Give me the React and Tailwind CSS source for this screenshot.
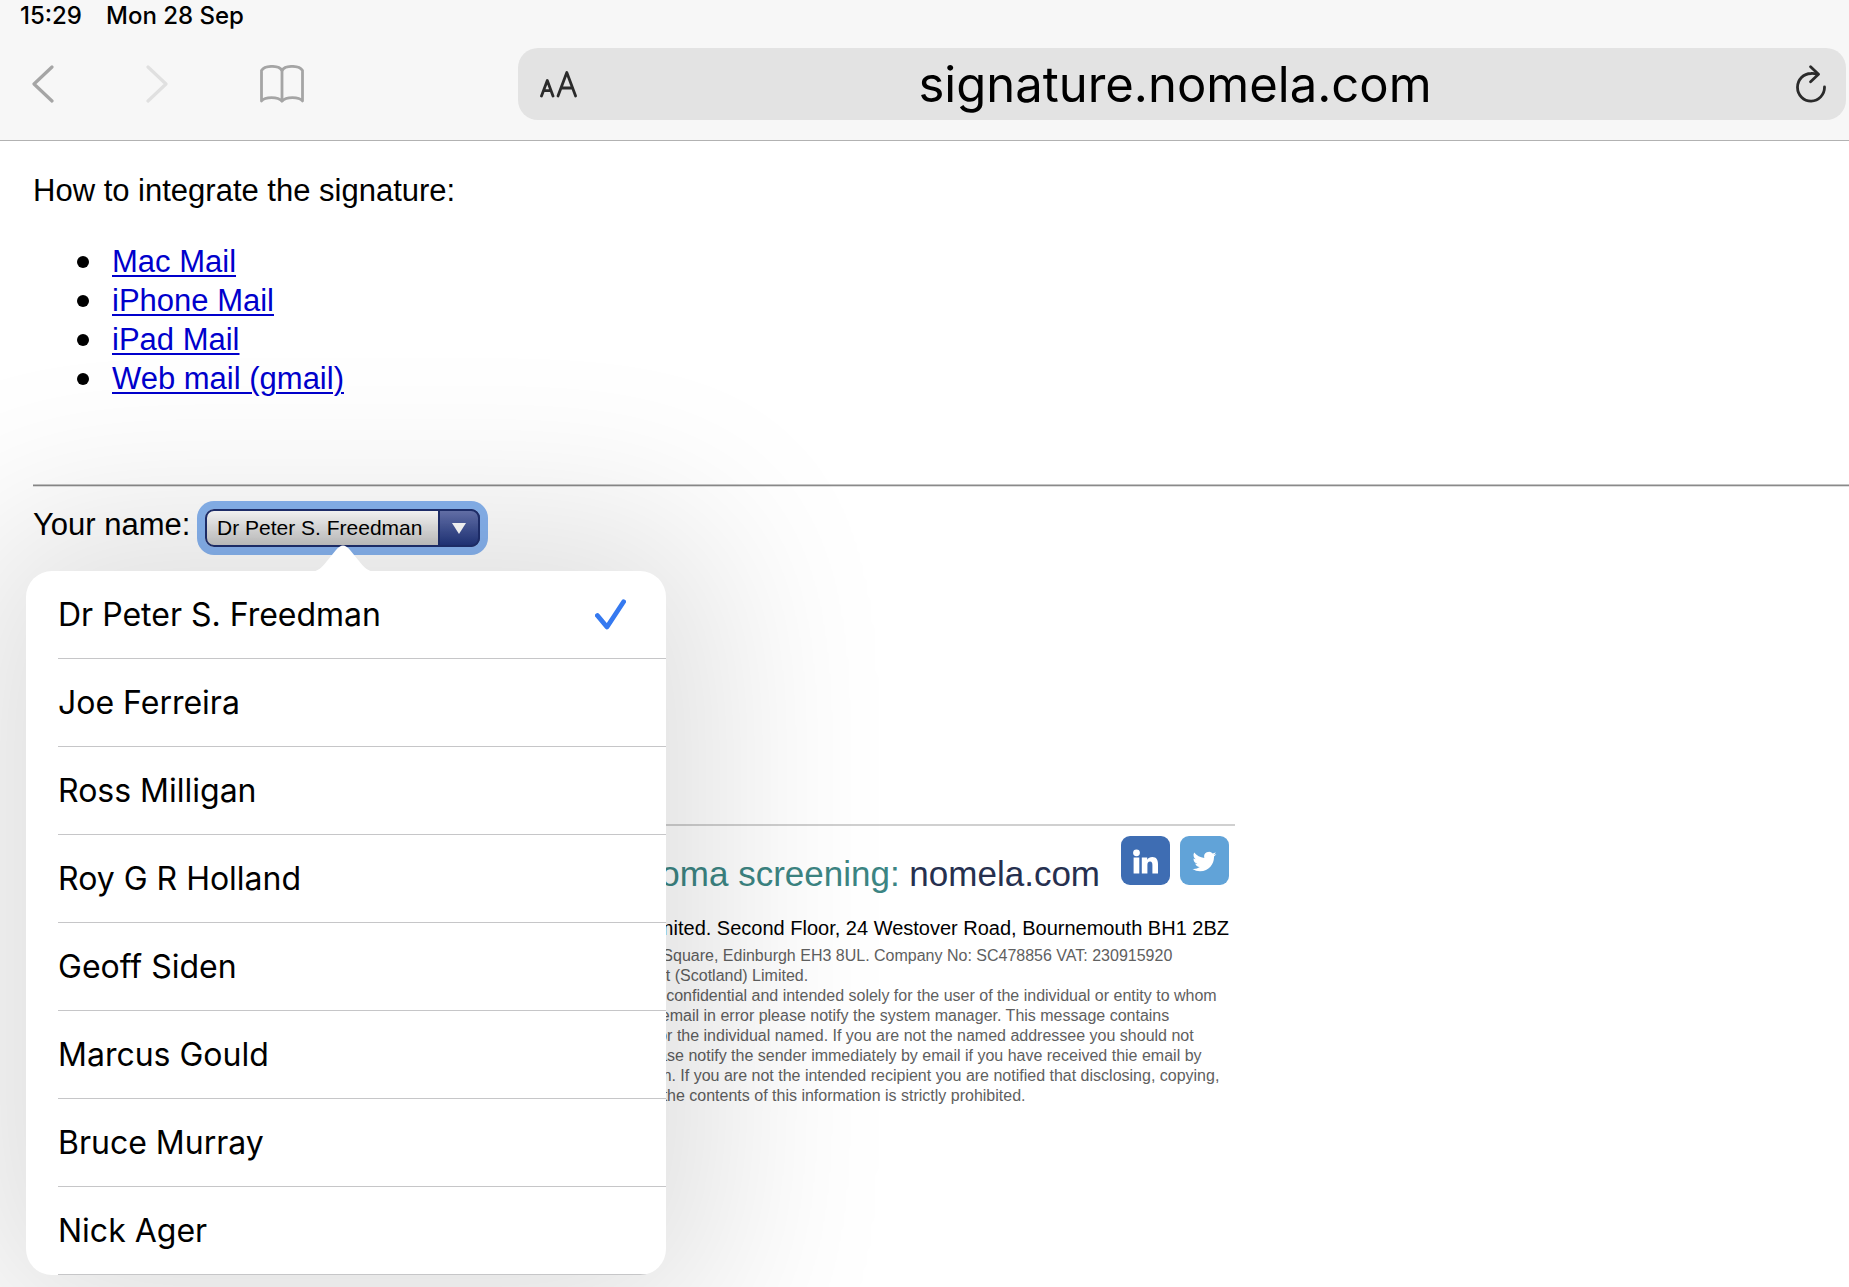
import React, { useState } from 'react';

const GUIDES = ['Mac Mail', 'iPhone Mail', 'iPad Mail', 'Web mail (gmail)'];

const NAMES = [
  'Dr Peter S. Freedman',
  'Joe Ferreira',
  'Ross Milligan',
  'Roy G R Holland',
  'Geoff Siden',
  'Marcus Gould',
  'Bruce Murray',
  'Nick Ager',
];

const BrowserBar = () => (
  <header className="bg-[#f7f7f7] border-b border-[#b2b2b2] font-['Inter',sans-serif]">
    <div className="flex gap-6 px-5 pt-1 h-8 text-[24px] leading-6 font-medium text-black">
      <span>15:29</span>
      <span>Mon 28 Sep</span>
    </div>
    <div className="flex items-center pt-4 pb-5 pl-8 pr-[3px]">
      <button aria-label="Back" className="shrink-0">
        <svg width="22" height="38" viewBox="0 0 22 38" fill="none" stroke="#a5a5a5" strokeWidth="3.2" strokeLinecap="round" strokeLinejoin="round">
          <path d="M20 2 L2 19 L20 36" />
        </svg>
      </button>
      <button aria-label="Forward" disabled className="shrink-0 ml-[92px]">
        <svg width="22" height="38" viewBox="0 0 22 38" fill="none" stroke="#e0e0e0" strokeWidth="3.2" strokeLinecap="round" strokeLinejoin="round">
          <path d="M2 2 L20 19 L2 36" />
        </svg>
      </button>
      <button aria-label="Bookmarks" className="shrink-0 ml-[92px]">
        <svg width="44" height="38" viewBox="0 0 44 38" fill="none" stroke="#a5a5a5" strokeWidth="2.8" strokeLinecap="round" strokeLinejoin="round">
          <path d="M22 5.5 C19 0 5 0 1.5 5.5 V36 C5 31.5 18 31.5 22 36 C26 31.5 39 31.5 42.5 36 V5.5 C39 0 25 0 22 5.5 Z" />
          <path d="M22 5.5 V36" />
        </svg>
      </button>
      <div className="flex flex-1 min-w-0 items-center h-[72px] ml-[214px] pl-[22px] pr-5 rounded-[20px] bg-[#e3e3e3]">
        <button aria-label="Text size" className="shrink-0">
          <svg width="38" height="28" viewBox="0 0 38 28" fill="none" stroke="#2b2b2b" strokeWidth="2.8" strokeLinecap="round" strokeLinejoin="round">
            <path d="M1.5 26 L7.3 10.5 L13 26 M3.8 20.6 H11" />
            <path d="M18 26 L26.8 2.5 L35.6 26 M21.3 18 H32.4" />
          </svg>
        </button>
        <input
          aria-label="Address"
          readOnly
          value="signature.nomela.com"
          className="flex-1 min-w-0 h-16 pt-0.5 pr-6 bg-transparent text-center text-[49px] text-black outline-none"
        />
        <button aria-label="Reload" className="shrink-0">
          <svg width="30" height="38" viewBox="0 0 30 38" fill="none" stroke="#2b2b2b" strokeWidth="2.8" strokeLinecap="round" strokeLinejoin="round">
            <path d="M28.5 22 A13.5 13.8 0 1 1 15 8.5 Q18 8.3 21 9.3" />
            <path d="M14.6 1.8 L22.5 9.3 L14.6 16.8" />
          </svg>
        </button>
      </div>
    </div>
  </header>
);

const NameMenu = ({ selected, onSelect }) => (
  <div className="absolute z-10 top-full -left-[7px] mt-6 w-[640px] rounded-[26px] bg-white shadow-[0_0_180px_50px_rgba(0,0,0,0.13)] font-['Inter',sans-serif]">
    <svg className="absolute -top-[26px] left-[282px]" width="70" height="27" viewBox="0 0 70 27" fill="#fff">
      <path d="M0 27 C11 27 14 22 19 16 L28 5 C33 -1 37 -1 42 5 L51 16 C56 22 59 27 70 27 Z" />
    </svg>
    <ul className="overflow-hidden rounded-[26px]">
      {NAMES.map((name) => (
        <li key={name} className="pl-8">
          <button
            onClick={() => onSelect(name)}
            className="flex w-full h-[88px] items-center justify-between border-b border-[#c6c6c8] pr-10 text-left text-[32px] text-black"
          >
            {name}
            {name === selected && (
              <svg width="31" height="31" viewBox="0 0 31 31" fill="none" stroke="#3579f0" strokeWidth="4.8" strokeLinecap="round" strokeLinejoin="round">
                <path d="M2.4 16.5 L12 28 L28.6 2.8" />
              </svg>
            )}
          </button>
        </li>
      ))}
    </ul>
  </div>
);

const Signature = () => (
  <section className="mt-[277px] ml-[305px] w-[897px]">
    <hr className="border-0 border-t-2 border-[#d0d0d0]" />
    <div className="flex justify-end gap-[10px] pt-[10px] pr-[6px]">
      <p className="pt-[18px] pr-[11px] text-[35px] leading-10 text-[#3c8583]">
        glaucoma screening: <a href="#nomela" className="text-[#26304f]">nomela.com</a>
      </p>
      <a href="#linkedin" aria-label="LinkedIn">
        <svg width="49" height="49" viewBox="0 0 49 49">
          <rect width="49" height="49" rx="9" fill="#3e6db3" />
          <g fill="#fff">
            <circle cx="15.5" cy="16.8" r="3.4" />
            <path d="M12.6 21.5 h5.7 v16 h-5.7 z" />
            <path d="M20.8 21.5 h5.4 v2.2 c1-1.7 2.8-2.7 5.2-2.7 c4 0 5.6 2.8 5.6 7 v9.5 h-5.6 v-8.6 c0-2-.6-3.4-2.3-3.4 c-2 0-2.7 1.5-2.7 3.4 v8.6 h-5.6 z" />
          </g>
        </svg>
      </a>
      <a href="#twitter" aria-label="Twitter">
        <svg width="49" height="49" viewBox="0 0 49 49">
          <rect width="49" height="49" rx="9" fill="#61a3d8" />
          <g transform="translate(12.5 13.5)">
            <path
              fill="#fff"
              d="M23.9 4.6a10 10 0 0 1-2.8.8 4.9 4.9 0 0 0 2.2-2.7c-1 .5-2 1-3.1 1.2a4.9 4.9 0 0 0-8.4 4.5C7.7 8.1 4.1 6.1 1.7 3.1a4.9 4.9 0 0 0 1.5 6.6c-.8 0-1.6-.2-2.2-.6v.1a4.9 4.9 0 0 0 3.9 4.8 5 5 0 0 1-2.2.1 4.9 4.9 0 0 0 4.6 3.4A9.9 9.9 0 0 1 0 19.5a14 14 0 0 0 7.5 2.2c9.1 0 14-7.5 14-14v-.6a10 10 0 0 0 2.4-2.5z"
            />
          </g>
        </svg>
      </a>
    </div>
    <p className="mt-[22px] pr-[6px] text-right text-[20px] leading-6 text-black">
      Limited. Second Floor, 24 Westover Road, Bournemouth BH1 2BZ
    </p>
    <p className="mt-[6px] text-[16px] leading-5 text-[#606060] whitespace-nowrap">
      Registered office in Scotland: No. 6 Charlotte Square, Edinburgh EH3 8UL. Company No: SC478856 VAT: 230915920
      <br />
      Nomela is a licensed trading name of First Test (Scotland) Limited.
      <br />
      This email and any files transmitted with it are confidential and intended solely for the user of the individual or entity to whom
      <br />
      they are addressed. If you have received this email in error please notify the system manager. This message contains
      <br />
      confidential information and is intended only for the individual named. If you are not the named addressee you should not
      <br />
      disseminate, distribute or copy this email. Please notify the sender immediately by email if you have received thie email by
      <br />
      mistake and delete this email from your system. If you are not the intended recipient you are notified that disclosing, copying,
      <br />
      distributing or taking any action in reliance on the contents of this information is strictly prohibited.
    </p>
  </section>
);

const App = () => {
  const [name, setName] = useState(NAMES[0]);

  return (
    <div className="flex min-h-screen flex-col bg-white">
      <BrowserBar />
      <main className="flex-1 overflow-hidden pt-[30px] pl-[33px] font-['Liberation_Sans',Arial,sans-serif] text-[31px] leading-[39px] text-black">
        <p>How to integrate the signature:</p>
        <ul className="mt-8 pl-11">
          {GUIDES.map((guide) => (
            <li key={guide} className="flex items-center gap-[23px] before:size-3 before:rounded-full before:bg-black">
              <a href="#guide" className="text-[#0000cc] underline decoration-2 underline-offset-[3px]">{guide}</a>
            </li>
          ))}
        </ul>
        <hr className="mt-[86px] h-[3px] border-t border-b border-t-[#c4c4c4] border-b-[#dedede] bg-[#8a8a8a]" />

        <div className="relative mt-[18px] flex items-baseline">
          <label htmlFor="name" className="w-[172px]">Your name:</label>
          <div className="relative h-[38px] rounded-[9px] ring-8 ring-[#88b4f0]">
            <select
              id="name"
              value={name}
              onChange={(e) => setName(e.target.value)}
              className="block h-[38px] w-[275px] appearance-none rounded-[9px] border-2 border-[#1f2f6e] bg-linear-to-b from-[#ffffff] to-[#c6c6c6] pl-[10px] pr-11 text-[21px] leading-[34px] outline-none"
            >
              {NAMES.map((n) => <option key={n}>{n}</option>)}
            </select>
            <span className="pointer-events-none absolute inset-y-0 right-0 flex w-[42px] items-center justify-center rounded-r-[9px] border-2 border-[#1f2f6e] bg-linear-to-b from-[#6875b0] to-[#22357c]">
              <svg width="14" height="11" viewBox="0 0 14 11" fill="#fff">
                <path d="M0 0 H14 L7 11 Z" />
              </svg>
            </span>
          </div>
          <NameMenu selected={name} onSelect={setName} />
        </div>

        <Signature />
      </main>
    </div>
  );
};

export default App;
